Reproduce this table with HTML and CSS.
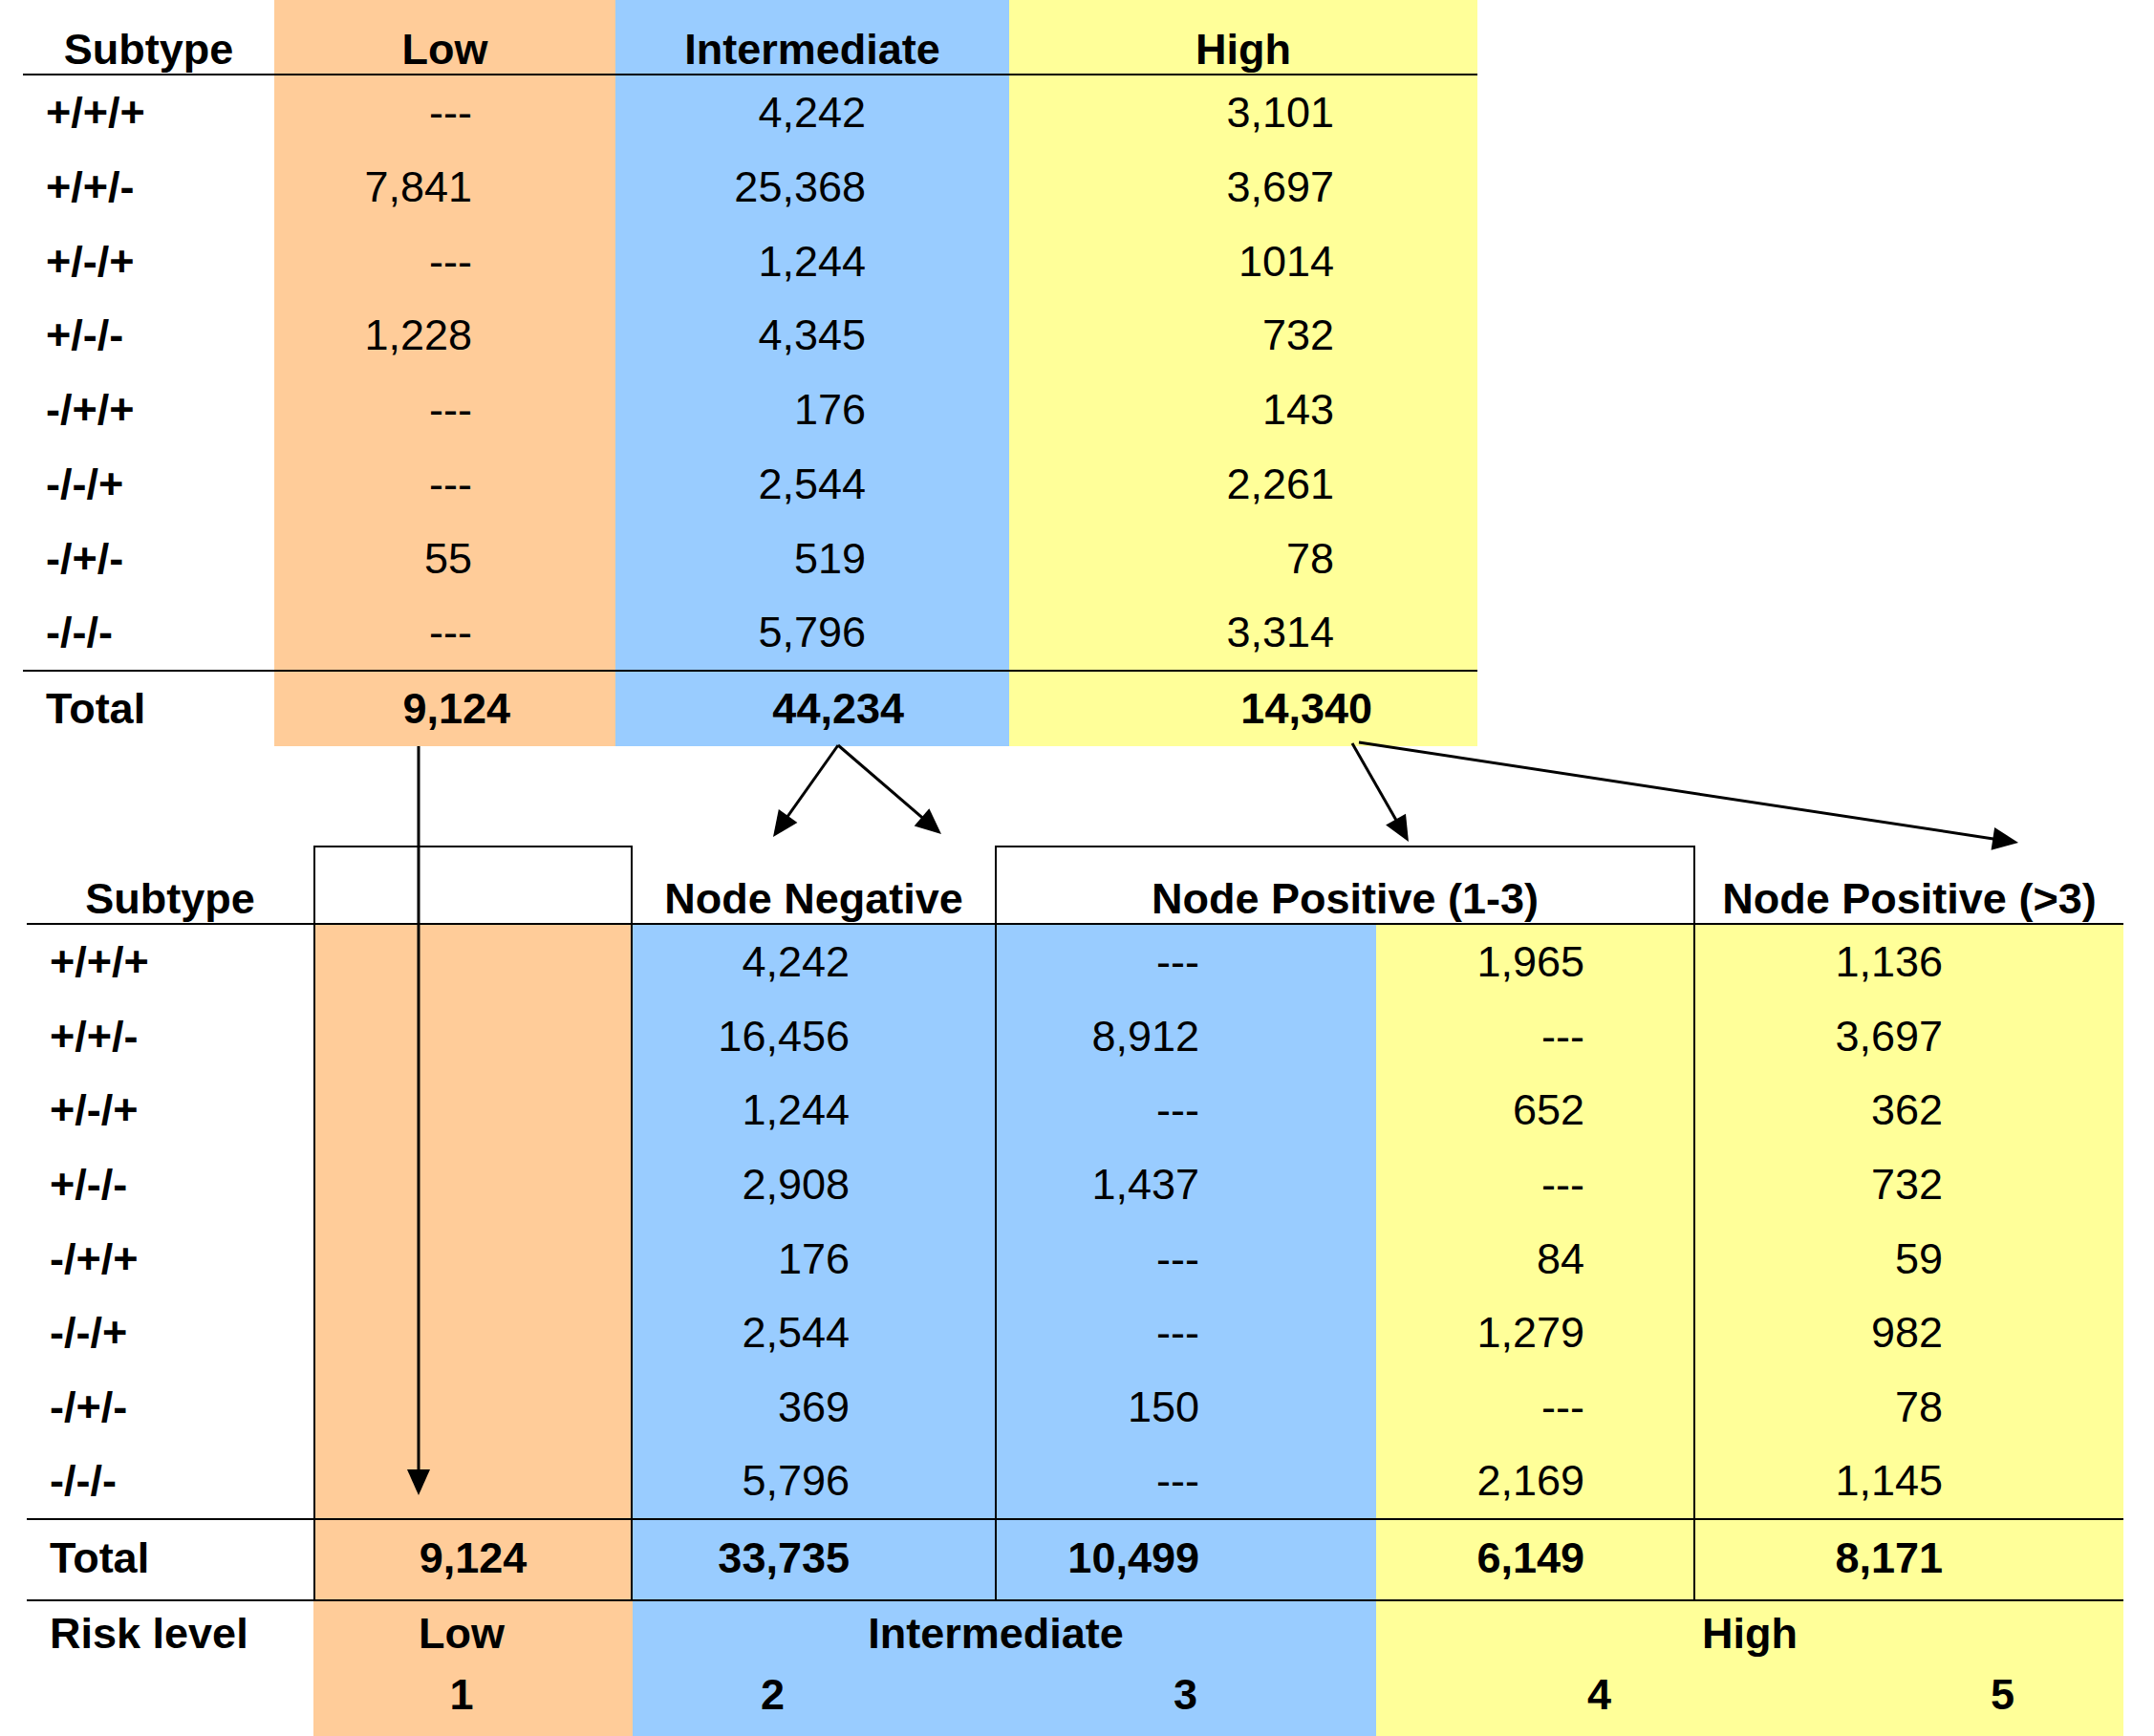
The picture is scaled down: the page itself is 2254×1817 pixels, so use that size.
FILE: index.html
```html
<!DOCTYPE html>
<html lang="en">
<head>
<meta charset="utf-8">
<title>Subtype risk table</title>
<link rel="stylesheet" href="styles.css">
</head>
<body>
<div class="page">
  <div class="top">
    <div class="row head">
      <div class="c hc">Subtype</div>
      <div class="c low hc">Low</div>
      <div class="c mid hc">Intermediate</div>
      <div class="c high hc">High</div>
    </div>
    <div class="row data"><div class="c lab">+/+/+</div><div class="c low num">---</div><div class="c mid num">4,242</div><div class="c high num">3,101</div></div>
    <div class="row data"><div class="c lab">+/+/-</div><div class="c low num">7,841</div><div class="c mid num">25,368</div><div class="c high num">3,697</div></div>
    <div class="row data"><div class="c lab">+/-/+</div><div class="c low num">---</div><div class="c mid num">1,244</div><div class="c high num">1014</div></div>
    <div class="row data"><div class="c lab">+/-/-</div><div class="c low num">1,228</div><div class="c mid num">4,345</div><div class="c high num">732</div></div>
    <div class="row data"><div class="c lab">-/+/+</div><div class="c low num">---</div><div class="c mid num">176</div><div class="c high num">143</div></div>
    <div class="row data"><div class="c lab">-/-/+</div><div class="c low num">---</div><div class="c mid num">2,544</div><div class="c high num">2,261</div></div>
    <div class="row data"><div class="c lab">-/+/-</div><div class="c low num">55</div><div class="c mid num">519</div><div class="c high num">78</div></div>
    <div class="row data"><div class="c lab">-/-/-</div><div class="c low num">---</div><div class="c mid num">5,796</div><div class="c high num">3,314</div></div>
    <div class="row total">
      <div class="c lab">Total</div>
      <div class="c low tot">9,124</div>
      <div class="c mid tot">44,234</div>
      <div class="c high tot">14,340</div>
    </div>
  </div>

  <div class="bottom">
    <div class="brow bhead">
      <div class="b b0 hc">Subtype</div>
      <div class="b b1 boxed"></div>
      <div class="b b2 hc">Node Negative</div>
      <div class="b span34 hc">Node Positive (1-3)</div>
      <div class="b b5 hc">Node Positive (&gt;3)</div>
    </div>
    <div class="brow bdata"><div class="b b0">+/+/+</div><div class="b b1 o"></div><div class="b b2 bl">4,242</div><div class="b b3 bl">---</div><div class="b b4 ye">1,965</div><div class="b b5 ye">1,136</div></div>
    <div class="brow bdata"><div class="b b0">+/+/-</div><div class="b b1 o"></div><div class="b b2 bl">16,456</div><div class="b b3 bl">8,912</div><div class="b b4 ye">---</div><div class="b b5 ye">3,697</div></div>
    <div class="brow bdata"><div class="b b0">+/-/+</div><div class="b b1 o"></div><div class="b b2 bl">1,244</div><div class="b b3 bl">---</div><div class="b b4 ye">652</div><div class="b b5 ye">362</div></div>
    <div class="brow bdata"><div class="b b0">+/-/-</div><div class="b b1 o"></div><div class="b b2 bl">2,908</div><div class="b b3 bl">1,437</div><div class="b b4 ye">---</div><div class="b b5 ye">732</div></div>
    <div class="brow bdata"><div class="b b0">-/+/+</div><div class="b b1 o"></div><div class="b b2 bl">176</div><div class="b b3 bl">---</div><div class="b b4 ye">84</div><div class="b b5 ye">59</div></div>
    <div class="brow bdata"><div class="b b0">-/-/+</div><div class="b b1 o"></div><div class="b b2 bl">2,544</div><div class="b b3 bl">---</div><div class="b b4 ye">1,279</div><div class="b b5 ye">982</div></div>
    <div class="brow bdata"><div class="b b0">-/+/-</div><div class="b b1 o"></div><div class="b b2 bl">369</div><div class="b b3 bl">150</div><div class="b b4 ye">---</div><div class="b b5 ye">78</div></div>
    <div class="brow bdata"><div class="b b0">-/-/-</div><div class="b b1 o"></div><div class="b b2 bl">5,796</div><div class="b b3 bl">---</div><div class="b b4 ye">2,169</div><div class="b b5 ye">1,145</div></div>
    <div class="brow btotal">
      <div class="b b0">Total</div>
      <div class="b b1 o ctr">9,124</div>
      <div class="b b2 bl">33,735</div>
      <div class="b b3 bl">10,499</div>
      <div class="b b4 ye">6,149</div>
      <div class="b b5 ye">8,171</div>
    </div>
    <div class="brow brisk">
      <div class="b b0">Risk level</div>
      <div class="b o ctr lowr">Low</div>
      <div class="b bl ctr span2 midr">Intermediate</div>
      <div class="b ye ctr span2">High</div>
    </div>
    <div class="brow blevel">
      <div class="b b0"></div>
      <div class="b o ctr lowr">1</div>
      <div class="b bl n2">2</div>
      <div class="b bl n3">3</div>
      <div class="b ye n4">4</div>
      <div class="b ye n5">5</div>
    </div>
  </div>

  <svg class="arrows" width="2254" height="1817" viewBox="0 0 2254 1817" xmlns="http://www.w3.org/2000/svg">
    <defs>
      <marker id="ah" markerUnits="userSpaceOnUse" markerWidth="28" markerHeight="24" refX="22" refY="12" orient="auto" overflow="visible">
        <path d="M0,0 L27,12 L0,24 Z" fill="#000"/>
      </marker>
    </defs>
    <g stroke="#000" stroke-width="3" fill="none" marker-end="url(#ah)">
      <line x1="877" y1="780" x2="811.9" y2="871.9"/>
      <line x1="877" y1="780" x2="981.2" y2="869.7"/>
      <line x1="1415" y1="778" x2="1471.5" y2="876.7"/>
      <line x1="1422" y1="777" x2="2107.1" y2="881.2"/>
      <line x1="438" y1="781" x2="438" y2="1560"/>
    </g>
  </svg>
</div>
</body>
</html>
```

FILE: styles.css
```css
html, body {
  margin: 0;
  padding: 0;
  background: #fff;
  overflow: hidden;
}

.page {
  position: relative;
  width: 2254px;
  height: 1817px;
  font-family: "Liberation Sans", Arial, sans-serif;
  font-size: 45px;
  color: #000;
}

/* ---------- top table ---------- */
.top {
  margin-left: 24px;
  width: 1522px;
}

.row {
  display: grid;
  grid-template-columns: 263px 357px 412px 490px;
}

.c {
  white-space: nowrap;
}

.low { background: #ffcc99; }
.mid { background: #99ccff; }
.high { background: #ffff99; }

.head {
  height: 77px;
  border-bottom: 2px solid #000;
}

.hc {
  display: flex;
  align-items: flex-end;
  justify-content: center;
  line-height: 50px;
  font-weight: bold;
}

.data {
  height: 77.75px;
  line-height: 77.75px;
}

.lab {
  padding-left: 24px;
  font-weight: bold;
}

.num {
  text-align: right;
  padding-right: 150px;
}

.total {
  height: 78px;
  line-height: 78px;
  border-top: 2px solid #000;
  font-weight: bold;
}

.tot {
  text-align: right;
  padding-right: 110px;
}

/* ---------- bottom table ---------- */
.bottom {
  margin-top: 104px;
  margin-left: 28px;
  width: 2194px;
}

.brow {
  display: grid;
  grid-template-columns: 300px 334px 379px 399px 332px 450px;
}

.b {
  box-sizing: border-box;
  white-space: nowrap;
}

.o { background: #ffcc99; }
.bl { background: #99ccff; }
.ye { background: #ffff99; }

.bhead {
  height: 81px;
  border-bottom: 2px solid #000;
}

.bhead .b0 {
  padding-left: 0;
}

.boxed {
  border-top: 2px solid #000;
  border-left: 2px solid #000;
  border-right: 2px solid #000;
}

.span34 {
  grid-column: span 2;
  border-top: 2px solid #000;
  border-left: 2px solid #000;
}

.bhead .b5 {
  border-left: 2px solid #000;
}

.b0 {
  padding-left: 24px;
  font-weight: bold;
}

.bdata {
  height: 77.625px;
  line-height: 77.625px;
}

.bdata .b1,
.btotal .b1 {
  border-left: 2px solid #000;
  border-right: 2px solid #000;
}

.bdata .b3,
.btotal .b3,
.bdata .b5,
.btotal .b5 {
  border-left: 2px solid #000;
}

.bdata .b2, .btotal .b2 { text-align: right; padding-right: 152px; }
.bdata .b3, .btotal .b3 { text-align: right; padding-right: 185px; }
.bdata .b4, .btotal .b4 { text-align: right; padding-right: 114px; }
.bdata .b5, .btotal .b5 { text-align: right; padding-right: 189px; }

.btotal {
  height: 83px;
  line-height: 79px;
  border-top: 2px solid #000;
  border-bottom: 2px solid #000;
  font-weight: bold;
}

.ctr {
  text-align: center;
}

.span2 {
  grid-column: span 2;
}

.brisk {
  height: 68px;
  line-height: 68px;
  font-weight: bold;
}

.lowr {
  padding-right: 24px;
}

.midr {
  padding-right: 18px;
}

.blevel {
  height: 79px;
  line-height: 60px;
  font-weight: bold;
}

.n2 { text-align: right; padding-right: 220px; }
.n3 { text-align: right; padding-right: 187px; }
.n4 { text-align: right; padding-right: 86px; }
.n5 { text-align: right; padding-right: 114px; }

/* ---------- arrows overlay ---------- */
.arrows {
  position: absolute;
  left: 0;
  top: 0;
  pointer-events: none;
}
```
